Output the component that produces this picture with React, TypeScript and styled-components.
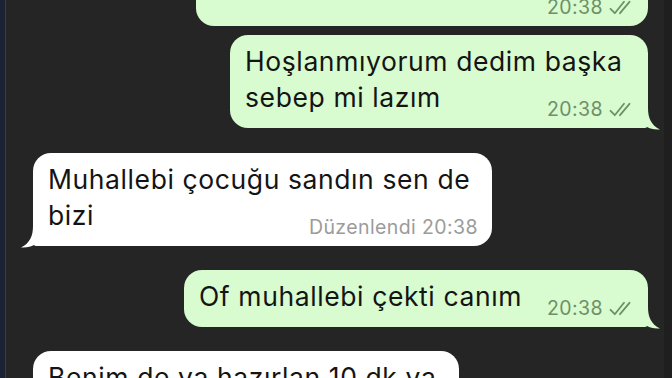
import React from "react";
import styled, { createGlobalStyle } from "styled-components";

const Global = createGlobalStyle`
  html, body { margin: 0; padding: 0; background: #252525; }
  body { width: 672px; height: 378px; overflow: hidden; }
`;

const Screen = styled.div`
  width: 672px;
  height: 378px;
  overflow: hidden;
  display: flex;
  background: #252525;
  font-family: Inter, "Liberation Sans", Arial, sans-serif;
`;

const EdgeStrip = styled.div`
  width: 5px;
  flex: none;
  background: #1b2234;
  border-right: 1px solid #363c48;
`;

const RightStrip = styled.div`
  width: 8px;
  flex: none;
  background: #1f1f1f;
`;

const Chat = styled.div`
  flex: 1;
  display: flex;
  flex-direction: column;
  padding: 0 16px 0 27px;
  margin-top: -57px;
`;

const Row = styled.div<{ $out: boolean; $gap: number }>`
  display: flex;
  justify-content: ${(p) => (p.$out ? "flex-end" : "flex-start")};
  margin-top: ${(p) => p.$gap}px;
`;

const Bubble = styled.div<{ $out: boolean; $w: number; $tail: boolean }>`
  position: relative;
  display: flow-root;
  box-sizing: border-box;
  width: ${(p) => p.$w}px;
  padding: 8px 14px 9px 15px;
  background: ${(p) => (p.$out ? "#d8fbcf" : "#ffffff")};
  border-radius: 18px;
  ${(p) =>
    p.$tail
      ? p.$out
        ? "border-bottom-right-radius: 4px;"
        : "border-bottom-left-radius: 4px;"
      : ""}
  color: #141414;
  font-size: 26.5px;
  line-height: 36px;
  letter-spacing: 0.6px;
`;

const Meta = styled.span<{ $out: boolean }>`
  float: right;
  display: flex;
  align-items: center;
  gap: 6px;
  margin: 20px 0 0 14px;
  height: 20px;
  font-size: 19.5px;
  line-height: 20px;
  letter-spacing: 0.4px;
  color: ${(p) => (p.$out ? "#6f8f69" : "#9b9b9b")};
`;

const TailSvg = styled.svg<{ $out: boolean }>`
  position: absolute;
  bottom: -2px;
  width: 20px;
  height: 22px;
  ${(p) =>
    p.$out ? "right: -12px;" : "left: -12px; transform: scaleX(-1);"}
`;

const Spacer = styled.div`
  height: 26px;
`;

const Ticks = () => (
  <svg width="25" height="15" viewBox="0 0 25 15" fill="none">
    <path
      d="M1.5 8.8 L5.8 13.2 L15 1.8"
      stroke="#6f8f69"
      strokeWidth="1.8"
      strokeLinecap="round"
      strokeLinejoin="round"
    />
    <path
      d="M11 13.2 L20.5 1.8"
      stroke="#6f8f69"
      strokeWidth="1.8"
      strokeLinecap="round"
    />
  </svg>
);

const Tail = ({ out }: { out: boolean }) => (
  <TailSvg $out={out} viewBox="0 0 20 22">
    <path
      d="M0 0 L8 0 C8 10 11 17 20 21.5 C14 22 10 20.5 7 19 C5 20 3 20 0 20 Z"
      fill={out ? "#d8fbcf" : "#ffffff"}
    />
  </TailSvg>
);

type Msg = {
  out: boolean;
  width: number;
  gap: number;
  tail: boolean;
  lines: string[];
  meta: string;
};

const messages: Msg[] = [
  { out: true, width: 452, gap: 0, tail: false, lines: [], meta: "20:38" },
  {
    out: true,
    width: 418,
    gap: 9,
    tail: true,
    lines: ["Hoşlanmıyorum dedim başka", "sebep mi lazım"],
    meta: "20:38",
  },
  {
    out: false,
    width: 459,
    gap: 25,
    tail: true,
    lines: ["Muhallebi çocuğu sandın sen de", "bizi"],
    meta: "Düzenlendi 20:38",
  },
  {
    out: true,
    width: 464,
    gap: 24,
    tail: true,
    lines: ["Of muhallebi çekti canım"],
    meta: "20:38",
  },
  {
    out: false,
    width: 426,
    gap: 24,
    tail: false,
    lines: ["Benim de ya hazırlan 10 dk ya"],
    meta: "20:39",
  },
];

export default function App() {
  return (
    <>
      <Global />
      <Screen>
        <EdgeStrip />
        <Chat>
          {messages.map((m, i) => (
            <Row key={i} $out={m.out} $gap={m.gap}>
              <Bubble $out={m.out} $w={m.width} $tail={m.tail}>
                {m.lines.length === 0 && <Spacer />}
                {m.lines.map((l, j) => (
                  <React.Fragment key={j}>
                    {j > 0 && <br />}
                    {l}
                  </React.Fragment>
                ))}
                <Meta $out={m.out}>
                  {m.meta}
                  {m.out && <Ticks />}
                </Meta>
                {m.tail && <Tail out={m.out} />}
              </Bubble>
            </Row>
          ))}
        </Chat>
        <RightStrip />
      </Screen>
    </>
  );
}
